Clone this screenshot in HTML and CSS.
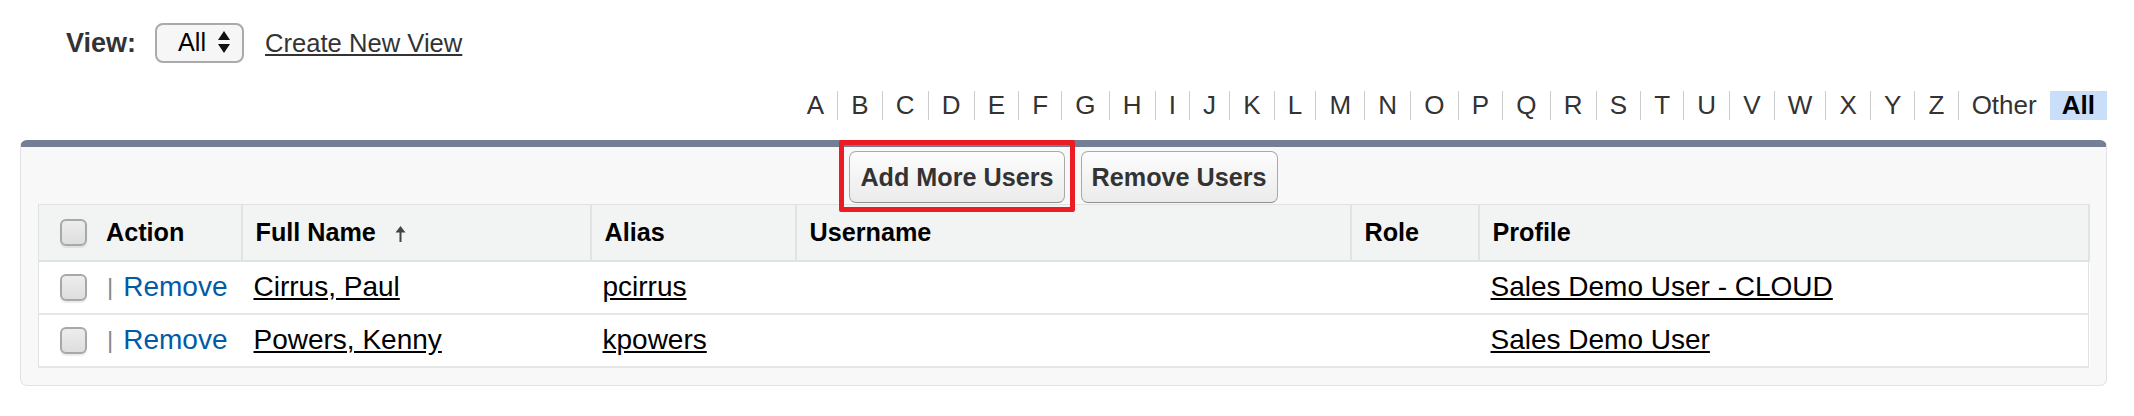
FILE: index.html
```html
<!DOCTYPE html>
<html lang="en">
  <head>
    <meta charset="UTF-8" />
    <meta name="viewport" content="width=device-width, initial-scale=1.0" />
    <title>Group Members</title>
    <link rel="stylesheet" href="styles.css">
  </head>
  <body>
    <div class="view-bar">
      <span class="view-label">View:</span>
      <span class="view-select">
        All
        <svg class="select-arrows" width="12" height="22" viewBox="0 0 12 22">
          <polygon points="0,9 6,0 12,9" fill="#111" />
          <polygon points="0,13 6,22 12,13" fill="#111" />
        </svg>
      </span>
      <a class="view-link" href="#">Create New View</a>
    </div>

    <div class="rolodex">
      <a href="#">A</a><a href="#">B</a><a href="#">C</a><a href="#">D</a><a href="#">E</a><a href="#">F</a><a href="#">G</a><a href="#">H</a><a href="#">I</a><a href="#">J</a><a href="#">K</a><a href="#">L</a><a href="#">M</a><a href="#">N</a><a href="#">O</a><a href="#">P</a><a href="#">Q</a><a href="#">R</a><a href="#">S</a><a href="#">T</a><a href="#">U</a><a href="#">V</a><a href="#">W</a><a href="#">X</a><a href="#">Y</a><a href="#">Z</a><a href="#">Other</a><span class="current">All</span>
    </div>

    <div class="block">
      <div class="block-buttons">
        <button class="btn marked">Add More Users</button>
        <button class="btn">Remove Users</button>
      </div>

      <table class="list">
        <colgroup>
          <col class="col-action" />
          <col class="col-name" />
          <col class="col-alias" />
          <col class="col-user" />
          <col class="col-role" />
          <col class="col-profile" />
        </colgroup>
        <thead>
          <tr>
            <th><div class="action-cell"><span class="check head-check"></span>Action</div></th>
            <th>
              Full Name
              <svg class="sort-arrow" width="11" height="16" viewBox="0 0 11 16">
                <polygon points="5.5,0 10.5,6.5 0.5,6.5" fill="#444" />
                <rect x="4.5" y="5" width="2" height="11" fill="#444" />
              </svg>
            </th>
            <th>Alias</th>
            <th>Username</th>
            <th>Role</th>
            <th>Profile</th>
          </tr>
        </thead>
        <tbody>
          <tr>
            <td><div class="action-cell"><span class="check"></span><span class="pipe">|</span><a class="remove" href="#">Remove</a></div></td>
            <td><a href="#">Cirrus, Paul</a></td>
            <td><a href="#">pcirrus</a></td>
            <td></td>
            <td></td>
            <td><a href="#">Sales Demo User - CLOUD</a></td>
          </tr>
          <tr>
            <td><div class="action-cell"><span class="check"></span><span class="pipe">|</span><a class="remove" href="#">Remove</a></div></td>
            <td><a href="#">Powers, Kenny</a></td>
            <td><a href="#">kpowers</a></td>
            <td></td>
            <td></td>
            <td><a href="#">Sales Demo User</a></td>
          </tr>
        </tbody>
      </table>
    </div>
  </body>
</html>
```

FILE: styles.css
```css
* {
  margin: 0;
  padding: 0;
  box-sizing: border-box;
}

body {
  font-family: "Liberation Sans", Arial, Helvetica, sans-serif;
  font-size: 28px;
  color: #000;
  background-color: #fff;
}

/* view picker */
.view-bar {
  display: flex;
  align-items: center;
  padding: 23px 0 0 66px;
}

.view-label {
  font-size: 27px;
  font-weight: bold;
  color: #333;
  margin-right: 19px;
}

.view-select {
  display: flex;
  align-items: center;
  height: 40px;
  width: 89px;
  padding-left: 21px;
  padding-bottom: 2px;
  font-size: 25.2px;
  color: #000;
  background-color: #f6f6f6;
  border: 2px solid #aaa;
  border-radius: 8px;
}

.select-arrows {
  margin-left: 12px;
}

.view-link {
  margin-left: 21px;
  font-size: 25.6px;
  color: #333;
}

/* letters */
.rolodex {
  display: flex;
  justify-content: flex-end;
  margin: 28px 27px 0 0;
  font-size: 26px;
  line-height: 29px;
}

.rolodex a {
  padding: 0 13.1px;
  color: #333;
  text-decoration: none;
  border-left: 1px solid #ccc;
}

.rolodex a:first-child {
  border-left: none;
}

.rolodex .current {
  padding: 0 12px;
  font-weight: bold;
  color: #000;
  background-color: #c9def8;
}

/* page block */
.block {
  margin: 20px 27px 0 20px;
  padding: 0 17px 17px;
  background-color: #f8f8f8;
  border: 1px solid #e0e3e5;
  border-top: 7px solid #747e96;
  border-radius: 7px;
}

.block-buttons {
  display: flex;
  justify-content: center;
  gap: 16px;
  padding: 4px 0 1px;
}

.btn {
  position: relative;
  height: 52px;
  padding: 0 10px;
  font-family: inherit;
  font-size: 25.2px;
  font-weight: bold;
  color: #333;
  background: linear-gradient(#fdfdfd, #ebebeb);
  border: 1px solid #a9a9a9;
  border-bottom-color: #8f8f8f;
  border-radius: 7px;
  cursor: pointer;
}

.btn.marked::after {
  content: "";
  position: absolute;
  top: -12px;
  left: -11px;
  right: -11px;
  bottom: -10px;
  border: 5px solid #ec1c24;
  border-radius: 2px;
}

/* member list */
.list {
  width: 100%;
  table-layout: fixed;
  border-collapse: collapse;
  background-color: #fff;
  border: 1px solid #e0e3e5;
}

.col-action { width: 203px; }
.col-name { width: 349px; }
.col-alias { width: 205px; }
.col-user { width: 555px; }
.col-role { width: 128px; }
.col-profile { width: 610px; }

.list th {
  height: 56px;
  padding: 0 13px;
  text-align: left;
  font-size: 25.2px;
  font-weight: bold;
  color: #000;
  background-color: #f2f3f3;
  border-right: 2px solid #e0e3e5;
  border-bottom: 2px solid #e0e3e5;
}

.list td {
  height: 53px;
  padding: 0 12px;
  border-bottom: 2px solid #e6e6e6;
}

.list td a {
  color: #000;
}

.list th:first-child,
.list td:first-child {
  padding-left: 21px;
}

.action-cell {
  display: flex;
  align-items: center;
}

.check {
  width: 27px;
  height: 27px;
  margin-right: 20px;
  background: linear-gradient(#ededed, #dedede);
  border: 2px solid #a8a8a8;
  border-radius: 6px;
  box-shadow: 0 2px 1px rgba(0, 0, 0, 0.08);
}

.head-check {
  margin-right: 19px;
}

.pipe {
  font-size: 24px;
  color: #8a8a8a;
  margin-right: 10px;
}

.list td a.remove {
  color: #015ba7;
  text-decoration: none;
}

.sort-arrow {
  margin-left: 12px;
  vertical-align: -1px;
}
```
